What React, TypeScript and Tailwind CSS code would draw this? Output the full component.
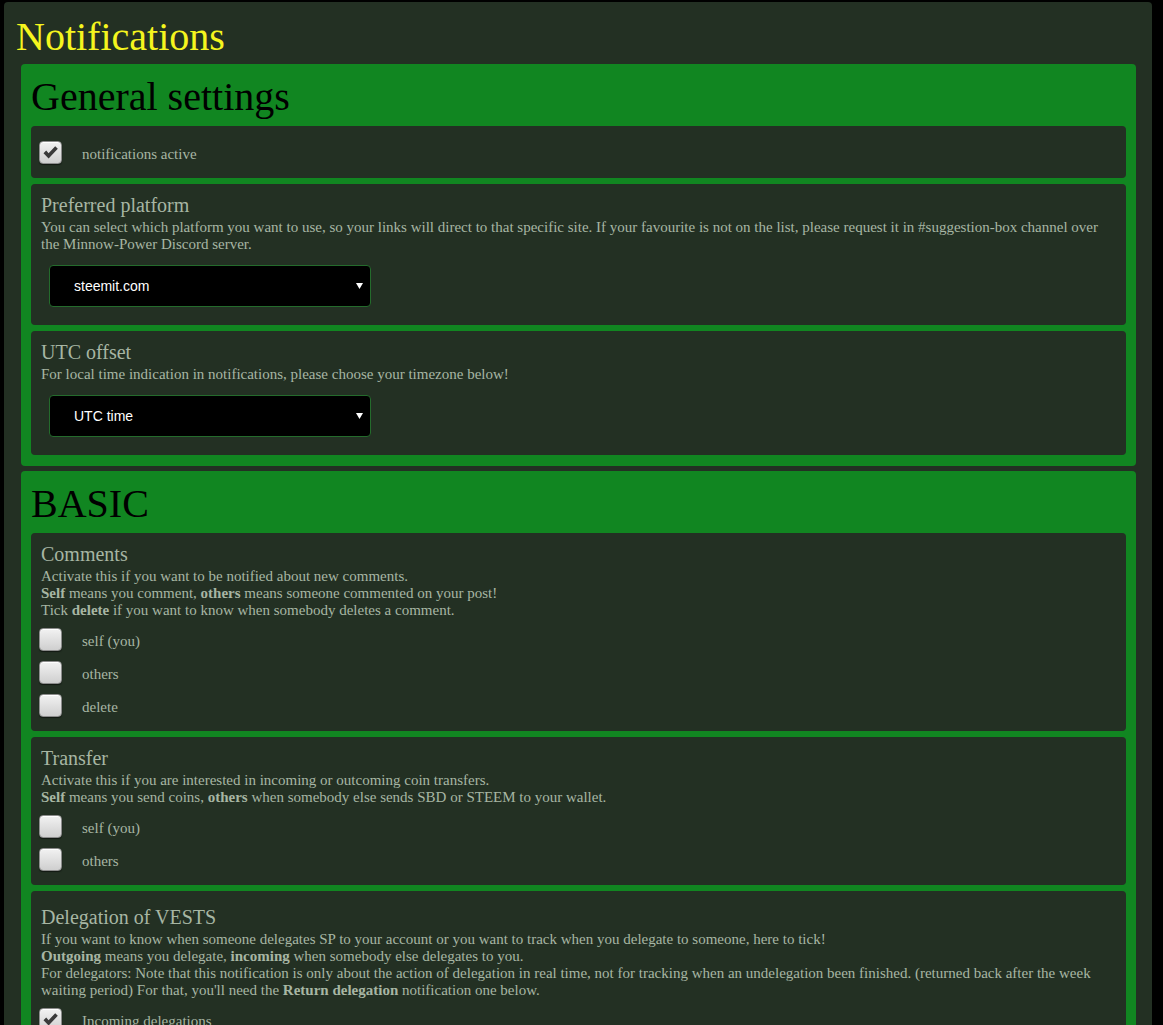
import React, { useState } from 'react';

const serif = { fontFamily: '"Liberation Serif", "Times New Roman", serif' };

interface CheckRowProps {
  label: string;
  initial?: boolean;
}

const CheckRow: React.FC<CheckRowProps> = ({ label, initial = false }) => {
  const [checked, setChecked] = useState(initial);
  return (
    <label className="flex h-[33px] items-center cursor-pointer select-none">
      <span
        onClick={() => setChecked(!checked)}
        className="-ml-[2px] flex h-[23px] w-[23px] items-center justify-center rounded-[4px] border border-[#8c8c8c] bg-gradient-to-b from-[#f2f2f2] to-[#cfcfcf] shadow-[inset_0_1px_0_#ffffff,0_1px_1px_rgba(0,0,0,0.5)]"
      >
        {checked && (
          <svg width="17" height="15" viewBox="0 0 17 15">
            <path d="M1.5 8.2 L4.2 5.6 L6.6 8.2 L13.2 1.2 L15.8 3.8 L6.6 13.4 Z" fill="#3a3a3a" />
          </svg>
        )}
      </span>
      <span className="ml-[20px] pt-[4px] text-[15px]">{label}</span>
    </label>
  );
};

const FakeSelect: React.FC<{ value: string; options: string[] }> = ({ value, options }) => (
  <div className="relative mt-[12px] mb-[9px] ml-[8px] w-[322px]">
    <select
      defaultValue={value}
      className="h-[42px] w-full appearance-none rounded-[4px] border border-[#246b2c] bg-black pl-[24px] text-[14px] text-white outline-none"
      style={{ fontFamily: '"Liberation Sans", Arial, sans-serif' }}
    >
      {options.map(o => (
        <option key={o}>{o}</option>
      ))}
    </select>
    <svg className="pointer-events-none absolute right-[8px] top-[18px]" width="7" height="6" viewBox="0 0 7 6">
      <polygon points="0,0 7,0 3.5,6" fill="#ffffff" />
    </svg>
  </div>
);

const Card: React.FC<{ title?: string; children: React.ReactNode; titleClass?: string }> = ({ title, children, titleClass }) => (
  <div className="rounded-[4px] bg-[#233023] px-[10px] pt-[10px] pb-[9px]">
    {title && <div className={`mb-[2px] text-[20px] leading-[23px] ${titleClass ?? ''}`}>{title}</div>}
    {children}
  </div>
);

const Section: React.FC<{ heading: string; children: React.ReactNode }> = ({ heading, children }) => (
  <section className="ml-[5px] mr-[4px] flex flex-col gap-[6px] rounded-[4px] bg-[#118621] px-[10px] pt-[10px] pb-[11px]">
    <h2 className="text-[40px] leading-[46px] text-black">{heading}</h2>
    {children}
  </section>
);

const App: React.FC = () => {
  return (
    <div className="min-h-screen bg-black pt-[2px] text-[#a7b6a3]" style={serif}>
      <div className="ml-[4px] w-[1148px] rounded-[4px] bg-[#233023] px-[12px] pt-[12px] pb-[16px]">
        <h1 className="mb-[4px] text-[40px] leading-[46px] text-[#f5f51e]">Notifications</h1>

        <div className="flex flex-col gap-[5px]">
          <Section heading="General settings">
            <Card>
              <CheckRow label="notifications active" initial />
            </Card>

            <Card title="Preferred platform">
              <p className="text-[15px] leading-[17px]">
                You can select which platform you want to use, so your links will direct to that specific site. If your favourite is not on the list, please request it in #suggestion-box channel over the Minnow-Power Discord server.
              </p>
              <FakeSelect value="steemit.com" options={['steemit.com', 'busy.org', 'steempeak.com']} />
            </Card>

            <Card title="UTC offset">
              <p className="text-[15px] leading-[17px]">For local time indication in notifications, please choose your timezone below!</p>
              <FakeSelect value="UTC time" options={['UTC time', 'UTC +1', 'UTC +2', 'UTC -1']} />
            </Card>
          </Section>

          <Section heading="BASIC">
            <Card title="Comments">
              <p className="text-[15px] leading-[17px]">
                Activate this if you want to be notified about new comments.
                <br />
                <b>Self</b> means you comment, <b>others</b> means someone commented on your post!
                <br />
                Tick <b>delete</b> if you want to know when somebody deletes a comment.
              </p>
              <div className="mt-[4px]">
                <CheckRow label="self (you)" />
                <CheckRow label="others" />
                <CheckRow label="delete" />
              </div>
            </Card>

            <Card title="Transfer">
              <p className="text-[15px] leading-[17px]">
                Activate this if you are interested in incoming or outcoming coin transfers.
                <br />
                <b>Self</b> means you send coins, <b>others</b> when somebody else sends SBD or STEEM to your wallet.
              </p>
              <div className="mt-[4px]">
                <CheckRow label="self (you)" />
                <CheckRow label="others" />
              </div>
            </Card>

            <Card title="Delegation of VESTS" titleClass="pt-[5px]">
              <p className="text-[15px] leading-[17px]">
                If you want to know when someone delegates SP to your account or you want to track when you delegate to someone, here to tick!
                <br />
                <b>Outgoing</b> means you delegate, <b>incoming</b> when somebody else delegates to you.
                <br />
                For delegators: Note that this notification is only about the action of delegation in real time, not for tracking when an undelegation been finished. (returned back after the week waiting period) For that, you'll need the <b>Return delegation</b> notification one below.
              </p>
              <div className="mt-[4px]">
                <CheckRow label="Incoming delegations" initial />
                <CheckRow label="Outgoing delegations" />
              </div>
            </Card>
          </Section>
        </div>
      </div>
    </div>
  );
};

export default App;
